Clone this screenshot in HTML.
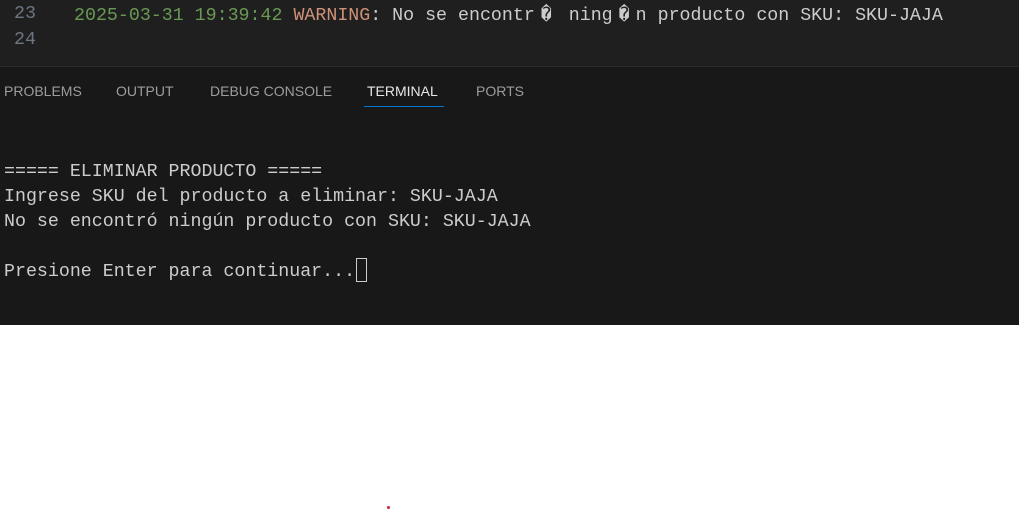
<html><head><style>
body{margin:0;width:1019px;height:511px;background:#fff;position:relative;overflow:hidden}
.ed{position:absolute;left:0;top:0;width:1019px;height:66px;background:#1f1f1f;border-bottom:1px solid #2b2b2b}
.mono{font-family:"Liberation Mono","DejaVu Sans Mono",monospace;font-size:18.3px;white-space:pre;position:absolute}
.pn{position:absolute;left:0;top:67px;width:1019px;height:258px;background:#181818}
.tab{position:absolute;top:83px;font-family:"Liberation Sans",sans-serif;font-size:14px;color:#9d9d9d}
.r{display:inline-block;width:23px;text-align:center}
</style></head><body>
<div class="ed">
<div class="mono" style="left:14px;top:4px;color:#6e7681">23</div>
<div class="mono" style="left:14px;top:30px;color:#6e7681">24</div>
<div class="mono" style="left:74px;top:4px;color:#cccccc"><span style="color:#6a9955">2025-03-31 19:39:42</span> <span style="color:#ce9178">WARNING</span>: No se encontr<span class="r">�</span> ning<span class="r">�</span>n producto con SKU: SKU-JAJA</div>
</div>
<div class="pn"></div>
<div class="tab" style="left:4px">PROBLEMS</div>
<div class="tab" style="left:116px">OUTPUT</div>
<div class="tab" style="left:210px">DEBUG CONSOLE</div>
<div class="tab" style="left:367px;color:#e7e7e7">TERMINAL</div>
<div style="position:absolute;left:364px;top:106px;width:80px;height:1px;background:#0078d4"></div>
<div class="tab" style="left:476px">PORTS</div>
<div class="mono" style="left:4px;top:160px;color:#cccccc;line-height:25px">===== ELIMINAR PRODUCTO =====
Ingrese SKU del producto a eliminar: SKU-JAJA
No se encontró ningún producto con SKU: SKU-JAJA

Presione Enter para continuar...</div>
<div style="position:absolute;left:356px;top:258px;width:9px;height:22px;border:1px solid #cccccc"></div>
<div style="position:absolute;left:387px;top:506px;width:3px;height:3px;background:#d0203a;border-radius:50%"></div>
</body></html>
